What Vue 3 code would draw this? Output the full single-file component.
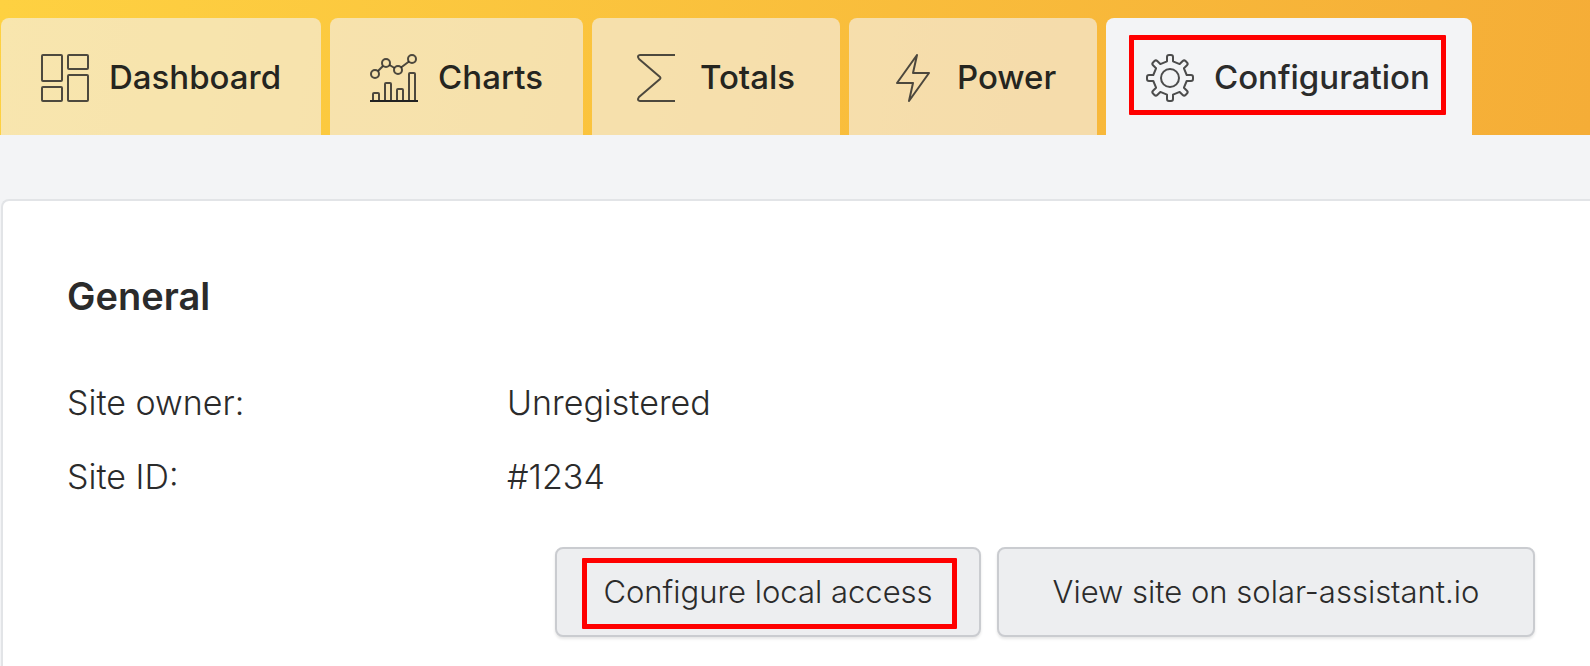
<script setup>
const tabs = [
  { id: 'dashboard', label: 'Dashboard' },
  { id: 'charts', label: 'Charts' },
  { id: 'totals', label: 'Totals' },
  { id: 'power', label: 'Power' },
  { id: 'configuration', label: 'Configuration', active: true },
]

const details = [
  { label: 'Site owner:', value: 'Unregistered' },
  { label: 'Site ID:', value: '#1234' },
]

// Eight-toothed gear outline centred in a 48x48 box.
function gearPath() {
  const parts = []
  for (let i = 0; i < 8; i++) {
    const a = (i * Math.PI) / 4
    const at = (x, r) =>
      `${(24 + x * Math.cos(a) + r * Math.sin(a)).toFixed(2)} ${(24 + x * Math.sin(a) - r * Math.cos(a)).toFixed(2)}`
    parts.push(
      `${i ? 'L' : 'M'}${at(-3, 16.7)}L${at(-3, 21)}Q${at(-3, 23)} ${at(-1, 23)}` +
        `L${at(1, 23)}Q${at(3, 23)} ${at(3, 21)}L${at(3, 16.7)}`,
    )
  }
  return parts.join('') + 'Z'
}
const gear = gearPath()
</script>

<template>
  <div class="page">
    <header class="header">
      <nav class="tabs">
        <a
          v-for="tab in tabs"
          :key="tab.id"
          href="#"
          class="tab"
          :class="{ active: tab.active }"
          :aria-current="tab.active ? 'page' : undefined"
        >
          <svg class="icon" viewBox="0 0 48 48" aria-hidden="true">
            <g v-if="tab.id === 'dashboard'">
              <rect x="1" y="1" width="20" height="26" rx="1" />
              <rect x="27" y="1" width="20" height="14" rx="1" />
              <rect x="1" y="33" width="20" height="14" rx="1" />
              <rect x="27" y="21" width="20" height="26" rx="1" />
            </g>
            <g v-else-if="tab.id === 'charts'">
              <circle cx="5" cy="20" r="4" />
              <circle cx="16" cy="9" r="4" />
              <circle cx="28" cy="16" r="4" />
              <circle cx="42" cy="5" r="4" />
              <path d="M8 17l5-5M19.500 11l5 3M31 13.500l8-6" />
              <path d="M3 47v-7q0-1 1-1h4q1 0 1 1v7M15 47V30q0-1 1-1h4q1 0 1 1v17M27 47V36q0-1 1-1h4q1 0 1 1v11M39 47V20q0-1 1-1h4q1 0 1 1v27" />
              <path class="axis" d="M0 47h48" />
            </g>
            <path
              v-else-if="tab.id === 'totals'"
              d="M43 1H8Q4.500 1.500 7 5L28 23q1 1 0 2L7 43q-2.500 3.500 1 4h35"
            />
            <path
              v-else-if="tab.id === 'power'"
              d="M28 1L24 19h16L20 47l4-18H8z"
            />
            <g v-else>
              <path :d="gear" />
              <circle cx="24" cy="24" r="9" />
            </g>
          </svg>
          <span>{{ tab.label }}</span>
          <span v-if="tab.active" class="mark tab-mark"></span>
        </a>
      </nav>
    </header>

    <main class="card">
      <h2>General</h2>
      <dl class="details">
        <template v-for="item in details" :key="item.label">
          <dt>{{ item.label }}</dt>
          <dd>{{ item.value }}</dd>
        </template>
      </dl>
      <div class="actions">
        <button type="button">
          Configure local access
          <span class="mark button-mark"></span>
        </button>
        <button type="button">View site on solar-assistant.io</button>
      </div>
    </main>
  </div>
</template>

<style>
body {
  margin: 0;
  background: #f3f4f6;
}
</style>

<style scoped>
.page {
  box-sizing: border-box;
  min-height: 100vh;
  display: flex;
  flex-direction: column;
  overflow: hidden;
  background: #f3f4f6;
  color: #2b2b2b;
  font-family: Inter, "Open Sans", sans-serif;
  font-size: 33px;
}
.header {
  padding: 18px 0 0 1px;
  background: linear-gradient(100deg, #fed141, #f5ad37);
}
.tabs {
  display: flex;
  gap: 9px;
}
.tab {
  position: relative;
  box-sizing: border-box;
  min-width: 248px;
  height: 117px;
  display: flex;
  align-items: center;
  gap: 20px;
  padding: 3px 40px 0;
  border-radius: 8px 8px 0 0;
  background: rgba(243, 244, 246, 0.6);
  color: #25251f;
  font-weight: 500;
  line-height: 42px;
  white-space: nowrap;
  text-decoration: none;
}
.tab.active {
  padding-right: 42px;
  background: #f3f4f6;
  color: #2b2b2b;
}
.tab span {
  padding-bottom: 2px;
}
.icon {
  width: 48px;
  height: 48px;
  flex: none;
  fill: none;
  stroke: #222;
  stroke-width: 2;
  stroke-linejoin: round;
  stroke-opacity: 0.8;
}
.axis {
  stroke-opacity: 1;
}
.mark {
  position: absolute;
  border: 5px solid #f00;
  border-radius: 1px;
  pointer-events: none;
}
.tab-mark {
  inset: 17px 26px 20px 23px;
}
.button-mark {
  inset: 9px 22px 6px 25px;
}
.card {
  flex: 1;
  margin: 64px 0 0 1px;
  padding: 71px 55px 28px 64px;
  border: solid #e2e4e7;
  border-width: 2px 0 0 2px;
  border-radius: 8px 0 0 0;
  background: #fff;
}
h2 {
  margin: 0 0 46px;
  font-size: 38px;
  line-height: 48px;
  font-weight: 600;
}
.details {
  display: grid;
  grid-template-columns: 440px 1fr;
  margin: 0;
  font-size: 34px;
  line-height: 74px;
  font-weight: 300;
}
dd {
  margin: 0;
}
.actions {
  display: grid;
  grid-template-columns: 426px 538px;
  justify-content: end;
  gap: 16px;
  margin-top: 33px;
}
button {
  position: relative;
  padding: 0;
  border: 2px solid #caccd0;
  border-radius: 8px;
  background: #edeef0;
  box-shadow: 0 2px 3px rgba(0, 0, 0, 0.1);
  color: #2b2b2b;
  font: inherit;
  font-size: 31px;
  line-height: 86px;
  font-weight: 300;
  white-space: nowrap;
}
</style>
